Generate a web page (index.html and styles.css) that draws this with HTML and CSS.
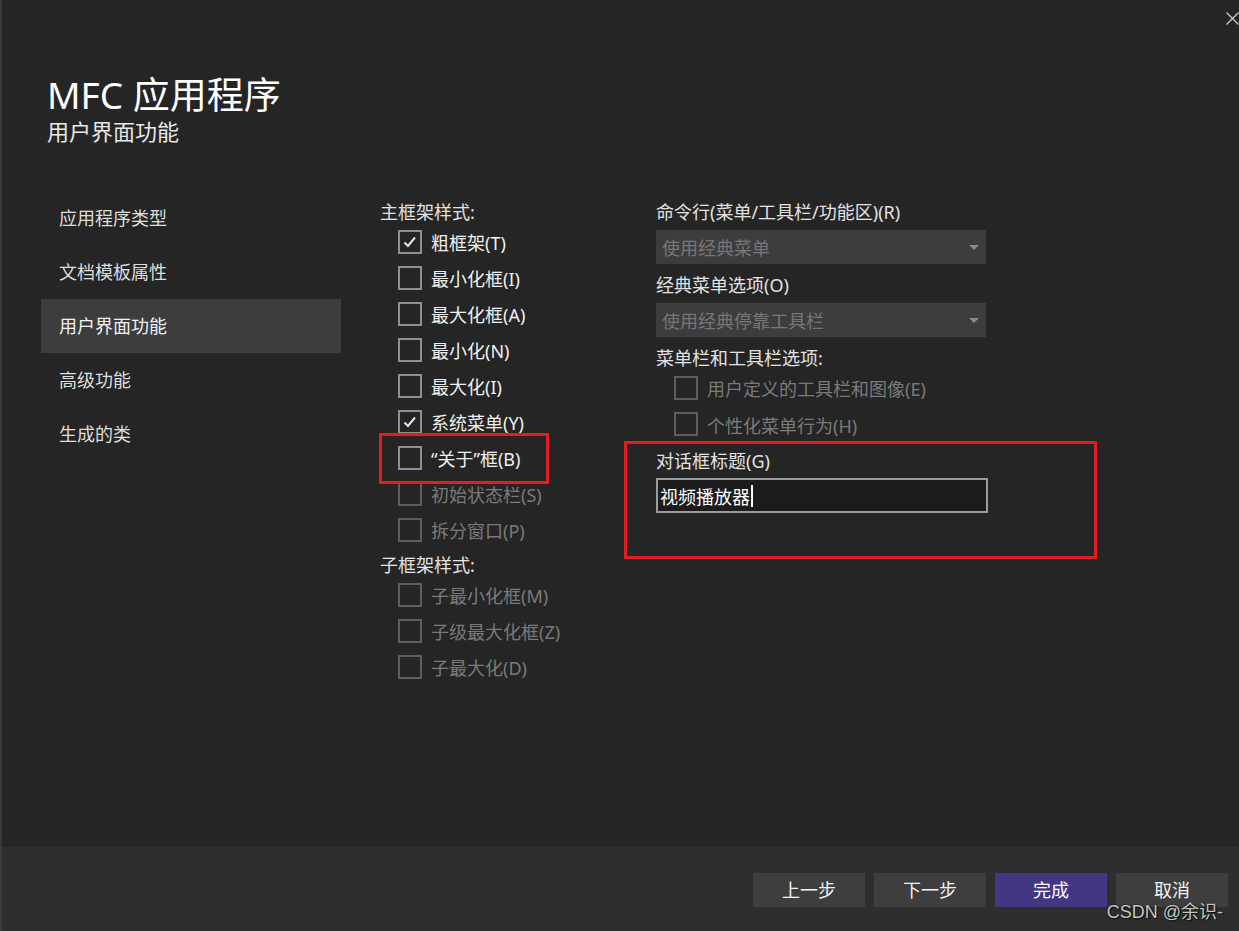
FILE: index.html
```html
<!DOCTYPE html>
<html lang="zh-CN">
<head>
<meta charset="utf-8">
<title>MFC 应用程序</title>
<link rel="stylesheet" href="styles.css">
</head>
<body>
<div class="window">
  <button class="close" aria-label="关闭">
    <svg width="13" height="13" viewBox="0 0 13 13"><path d="M0.5 0.5 L12.5 12.5 M12.5 0.5 L0.5 12.5" stroke="#d0d0d0" stroke-width="1.2" fill="none"/></svg>
  </button>

  <header class="head">
    <h1 class="title">MFC 应用程序</h1>
    <p class="subtitle">用户界面功能</p>
  </header>

  <div class="content">
    <nav class="nav">
      <div class="nav-item">应用程序类型</div>
      <div class="nav-item">文档模板属性</div>
      <div class="nav-item active">用户界面功能</div>
      <div class="nav-item">高级功能</div>
      <div class="nav-item">生成的类</div>
    </nav>

    <section class="col col-mid">
      <div class="label">主框架样式:</div>
      <div class="check"><span class="box checked"><svg viewBox="0 0 20 20" width="20" height="20"><path d="M4.5 10.5 L8 14 L15 5.5" stroke="#e6e6e6" stroke-width="2" fill="none"/></svg></span><span class="ctext">粗框架(T)</span></div>
      <div class="check"><span class="box"></span><span class="ctext">最小化框(I)</span></div>
      <div class="check"><span class="box"></span><span class="ctext">最大化框(A)</span></div>
      <div class="check"><span class="box"></span><span class="ctext">最小化(N)</span></div>
      <div class="check"><span class="box"></span><span class="ctext">最大化(I)</span></div>
      <div class="check"><span class="box checked"><svg viewBox="0 0 20 20" width="20" height="20"><path d="M4.5 10.5 L8 14 L15 5.5" stroke="#e6e6e6" stroke-width="2" fill="none"/></svg></span><span class="ctext">系统菜单(Y)</span></div>
      <div class="check"><span class="box"></span><span class="ctext">“关于”框(B)</span></div>
      <div class="check disabled"><span class="box"></span><span class="ctext">初始状态栏(S)</span></div>
      <div class="check disabled"><span class="box"></span><span class="ctext">拆分窗口(P)</span></div>
      <div class="label label-gap">子框架样式:</div>
      <div class="check disabled"><span class="box"></span><span class="ctext">子最小化框(M)</span></div>
      <div class="check disabled"><span class="box"></span><span class="ctext">子级最大化框(Z)</span></div>
      <div class="check disabled"><span class="box"></span><span class="ctext">子最大化(D)</span></div>
    </section>

    <section class="col col-right">
      <div class="label">命令行(菜单/工具栏/功能区)(R)</div>
      <div class="select sel-1"><span>使用经典菜单</span><span class="arrow"></span></div>
      <div class="label lbl-2">经典菜单选项(O)</div>
      <div class="select sel-2"><span>使用经典停靠工具栏</span><span class="arrow"></span></div>
      <div class="label lbl-3">菜单栏和工具栏选项:</div>
      <div class="check disabled"><span class="box"></span><span class="ctext">用户定义的工具栏和图像(E)</span></div>
      <div class="check disabled"><span class="box"></span><span class="ctext">个性化菜单行为(H)</span></div>
      <div class="label lbl-4">对话框标题(G)</div>
      <div class="input"><span class="itext">视频播放器</span><span class="caret"></span></div>
    </section>
  </div>

  <footer class="foot">
    <button class="btn">上一步</button>
    <button class="btn">下一步</button>
    <button class="btn primary">完成</button>
    <button class="btn">取消</button>
  </footer>

  <div class="mark mark-1"></div>
  <div class="mark mark-2"></div>
  <div class="watermark">CSDN @余识-</div>
</div>
</body>
</html>
```

FILE: styles.css
```css
* { box-sizing: border-box; }

html, body {
  margin: 0;
  padding: 0;
  background: #252525;
}

body {
  font-family: "Noto Sans", "Noto Sans CJK SC", sans-serif;
  color: #e6e6e6;
}

.window {
  position: relative;
  width: 1239px;
  height: 931px;
  background: #252525;
  border-left: 2px solid #3a3a3a;
  display: flex;
  flex-direction: column;
  overflow: hidden;
}

.close {
  position: absolute;
  top: 12px;
  right: 0;
  width: 13px;
  height: 13px;
  padding: 0;
  border: 0;
  background: transparent;
  display: flex;
}

.head {
  padding: 73px 0 0 45px;
}

.title {
  margin: 0;
  font-size: 37px;
  line-height: 44px;
  font-weight: 400;
  color: #ffffff;
}

.subtitle {
  margin: 0;
  font-size: 22px;
  line-height: 28px;
  color: #e8e8e8;
}

.content {
  flex: 1;
  display: flex;
  padding-top: 46px;
}

.nav {
  margin-left: 39px;
  width: 300px;
  display: flex;
  flex-direction: column;
}

.nav-item {
  height: 54px;
  line-height: 54px;
  padding-left: 18px;
  font-size: 18px;
  color: #dedede;
}

.nav-item.active {
  background: #3d3d3d;
  color: #f2f2f2;
}

.col {
  display: flex;
  flex-direction: column;
  padding-top: 8px;
}

.col-mid {
  margin-left: 39px;
  width: 276px;
}

.col-right {
  width: 340px;
}

.label {
  height: 26px;
  line-height: 26px;
  font-size: 18px;
  color: #e2e2e2;
  white-space: nowrap;
}

.label-gap { margin-top: 3px; }
.lbl-2 { margin-top: 8px; }
.lbl-3 { margin-top: 8px; }
.lbl-4 { margin-top: 4px; }

.check {
  height: 36px;
  display: flex;
  align-items: center;
  padding-left: 18px;
  white-space: nowrap;
}

.col-right .check { height: 36.5px; }

.box {
  width: 24px;
  height: 24px;
  border: 2px solid #8f8f8f;
  margin-right: 9px;
  margin-top: -3px;
  display: flex;
  align-items: center;
  justify-content: center;
  flex: none;
}

.ctext {
  font-size: 18px;
  line-height: 26px;
  color: #f0f0f0;
}

.check.disabled .box { border-color: #5e5e5e; }
.check.disabled .ctext { color: #7a7a7a; }

.select {
  width: 330px;
  height: 34px;
  margin-top: 5px;
  background: #3d3d3d;
  display: flex;
  align-items: center;
  justify-content: space-between;
  padding: 0 7px 0 6px;
  font-size: 18px;
  color: #767676;
}

.arrow {
  width: 0;
  height: 0;
  border-left: 5px solid transparent;
  border-right: 5px solid transparent;
  border-top: 5px solid #8a8a8a;
}

.input {
  width: 332px;
  height: 35px;
  margin-top: 4px;
  border: 2px solid #9c9c9c;
  background: #1c1c1c;
  display: flex;
  align-items: center;
  padding-left: 2px;
  font-size: 18px;
  color: #ffffff;
}

.caret {
  width: 2px;
  height: 22px;
  background: #ffffff;
  margin-left: 1px;
}

.foot {
  height: 84px;
  flex: none;
  background: #2e2e2e;
  display: flex;
  justify-content: flex-end;
  align-items: flex-start;
  gap: 9px;
  padding: 26px 11px 0 0;
}

.btn {
  width: 112px;
  height: 34px;
  border: 0;
  padding: 0;
  background: #3e3e3e;
  color: #f2f2f2;
  font-family: "Noto Sans", "Noto Sans CJK SC", sans-serif;
  font-size: 18px;
  line-height: 34px;
}

.btn.primary {
  background: #433783;
  color: #ffffff;
}

.mark {
  position: absolute;
  border: 3px solid #e51b24;
}

.mark-1 {
  left: 377px;
  top: 433px;
  width: 170px;
  height: 51px;
}

.mark-2 {
  left: 622px;
  top: 441px;
  width: 473px;
  height: 118px;
}

.watermark {
  position: absolute;
  right: 16px;
  bottom: 8px;
  font-family: "Liberation Sans", "Noto Sans CJK SC", sans-serif;
  font-size: 18px;
  line-height: 22px;
  color: #c4c4c4;
  text-shadow: 0 0 2px #111, 1px 1px 1px #111;
}
```
